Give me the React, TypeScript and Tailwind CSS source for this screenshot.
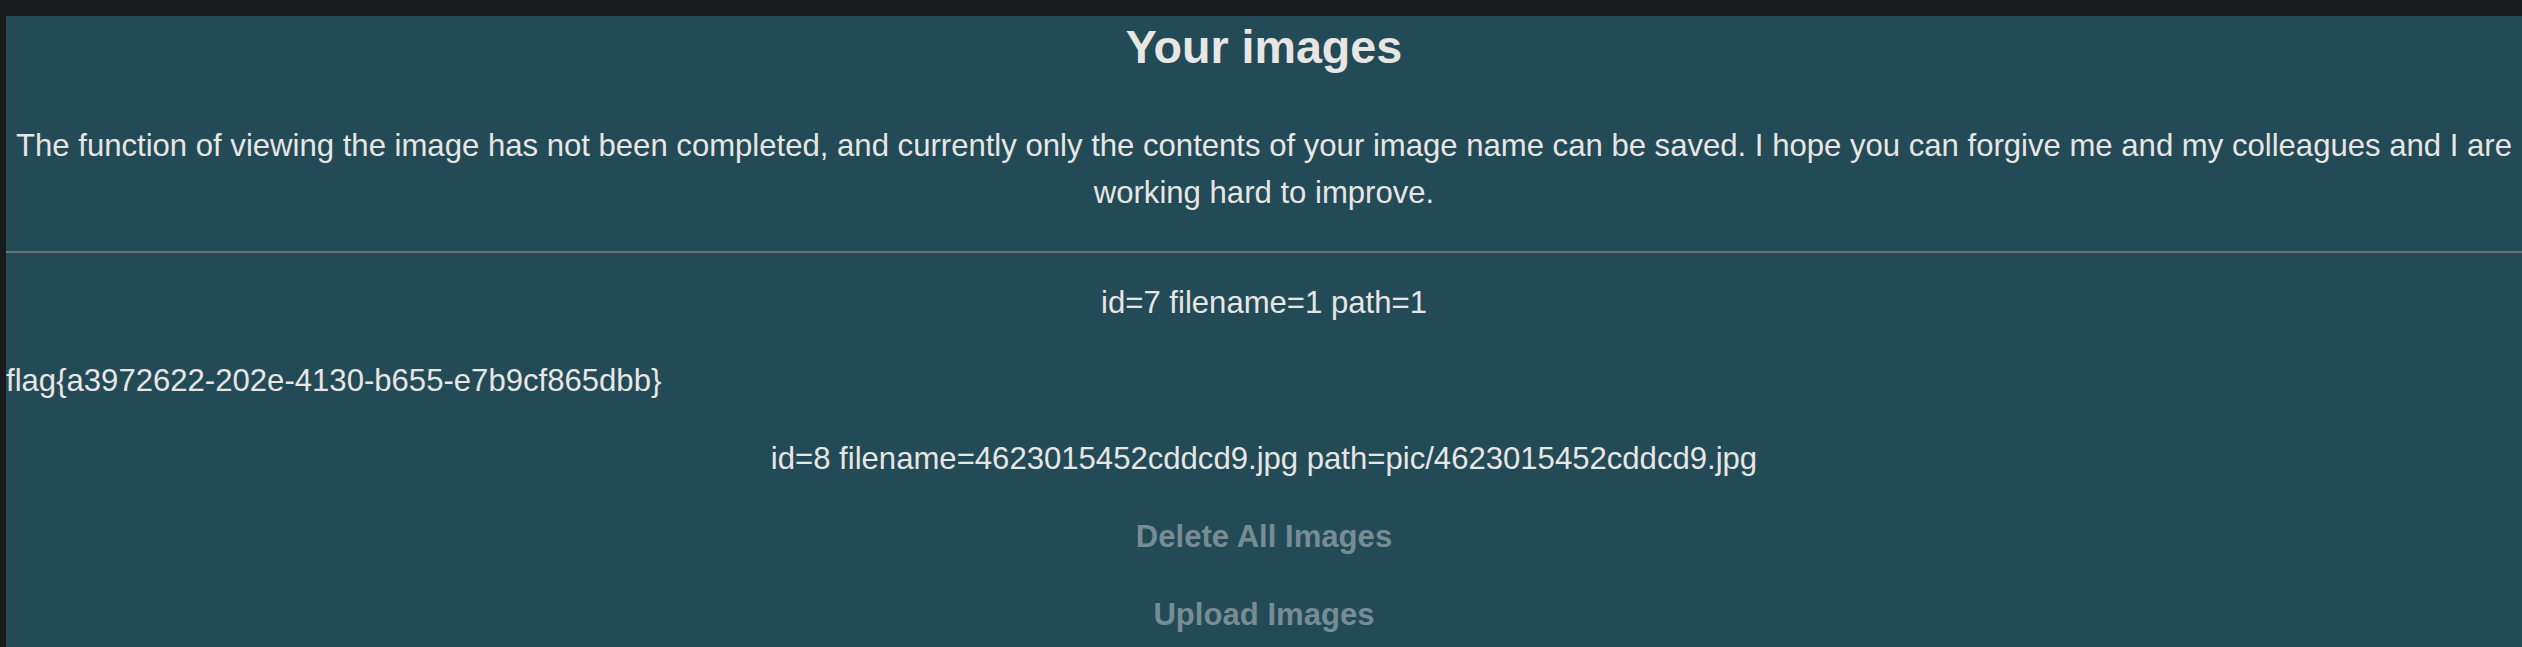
import React from 'react';

const rows = [
  { id: 7, filename: '1', path: '1' },
];

export default function App() {
  return (
    <div className="min-h-screen bg-[#181a1b] pt-[16px] pl-[6px] font-['Liberation_Sans',Arial,sans-serif]">
      <div className="min-h-[631px] bg-[#224a57] text-[#e8e6e3] text-[31.1px] leading-[46.5px]">
        {/* Header */}
        <h2 className="pt-[4px] text-center text-[46.65px] leading-[55px] font-bold">Your images</h2>
        <p className="mt-[48px] text-center">
          The function of viewing the image has not been completed, and currently only the contents of your image name can be saved. I hope you can forgive me and my colleagues and I are working hard to improve.
        </p>
        <hr className="mt-[35px] border-0 border-t-2 border-[#6f7272]" />

        {/* Image list */}
        <div className="mt-[27px] flex flex-col gap-[31.5px]">
          {rows.map((r) => (
            <p key={r.id} className="text-center">
              id={r.id} filename={r.filename} path={r.path}
            </p>
          ))}
          <p>flag{'{'}a3972622-202e-4130-b655-e7b9cf865dbb{'}'}</p>
          <p className="text-center">id=8 filename=4623015452cddcd9.jpg path=pic/4623015452cddcd9.jpg</p>
          <a className="text-center font-bold text-[#778d93]">Delete All Images</a>
          <a className="text-center font-bold text-[#778d93]">Upload Images</a>
        </div>
      </div>
    </div>
  );
}
